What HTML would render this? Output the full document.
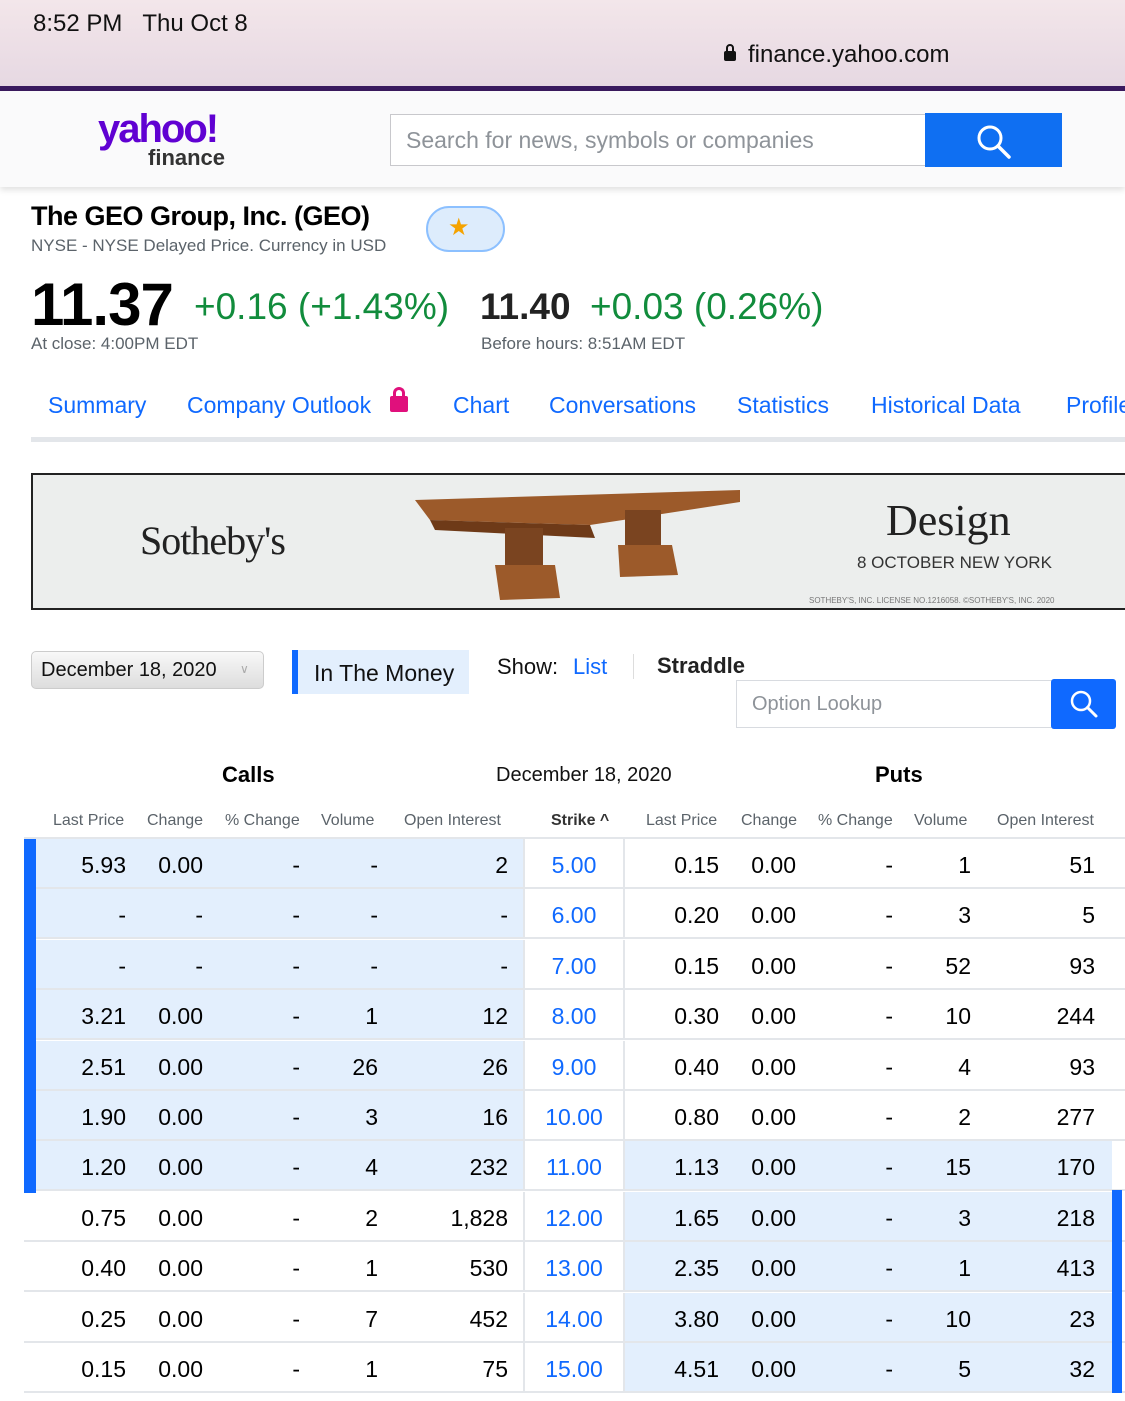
<!DOCTYPE html>
<html><head><meta charset="utf-8"><style>
*{margin:0;padding:0;box-sizing:border-box}
body{width:1125px;height:1401px;overflow:hidden;background:#fff;font-family:"Liberation Sans",sans-serif;position:relative;color:#000}
.a{position:absolute;white-space:nowrap}
.nav{color:#0f69ff;font-size:23px;top:392px}
.row{position:absolute;left:24px;width:1101px;height:50px;border-bottom:2px solid #e3e6ea}
.c{position:absolute;font-size:23px;top:13px;text-align:right;color:#000}
.hd{font-size:16px;color:#5b636a;top:812px}
</style></head><body>
<div class="a" style="left:0;top:0;width:1125px;height:87px;background:linear-gradient(#f3e6ea,#e6d8e2)"></div>
<div class="a" style="left:33px;top:10px;font-size:24px;color:#111">8:52 PM&nbsp;&nbsp;&nbsp;Thu Oct 8</div>
<div class="a" style="left:724px;top:51px;width:12px;height:10px;background:#111;border-radius:2px"></div>
<div class="a" style="left:726px;top:44px;width:8px;height:10px;border:2px solid #111;border-radius:4px 4px 0 0"></div>
<div class="a" style="left:748px;top:41px;font-size:24px;color:#111">finance.yahoo.com</div>
<div class="a" style="left:0;top:86px;width:1125px;height:5px;background:#3a1a5e"></div>
<div class="a" style="left:0;top:91px;width:1125px;height:96px;background:#fafafb;box-shadow:0 3px 6px rgba(0,0,0,.12)"></div>
<div class="a" style="left:98px;top:107px;font-size:40px;font-weight:bold;color:#6001d2;letter-spacing:-2px">yahoo!</div>
<div class="a" style="left:148px;top:145px;font-size:22px;font-weight:bold;color:#333">finance</div>
<div class="a" style="left:390px;top:114px;width:536px;height:52px;border:1px solid #c8c8cc;background:#fff"></div>
<div class="a" style="left:406px;top:127px;font-size:23px;color:#8e9399">Search for news, symbols or companies</div>
<div class="a" style="left:925px;top:113px;width:137px;height:54px;background:#0f6ff2"></div>
<svg class="a" style="left:975px;top:123px" width="38" height="38" viewBox="0 0 38 38"><circle cx="15" cy="15" r="11" fill="none" stroke="#fff" stroke-width="3"/><line x1="23" y1="23" x2="34" y2="34" stroke="#fff" stroke-width="3.5" stroke-linecap="round"/></svg>
<div class="a" style="left:31px;top:201px;font-size:27px;font-weight:bold;letter-spacing:-0.5px">The GEO Group, Inc. (GEO)</div>
<div class="a" style="left:31px;top:236px;font-size:17px;color:#5b636a">NYSE - NYSE Delayed Price. Currency in USD</div>
<div class="a" style="left:426px;top:206px;width:79px;height:46px;border:2px solid #8cc0ff;border-radius:23px;background:#ddecfc"></div>
<div class="a" style="left:448px;top:213px;font-size:24px;color:#f5a300">★</div>
<div class="a" style="left:31px;top:270px;font-size:60px;font-weight:bold;letter-spacing:-1px">11.37</div>
<div class="a" style="left:194px;top:286px;font-size:37px;color:#118c3c">+0.16 (+1.43%)</div>
<div class="a" style="left:480px;top:286px;font-size:37px;font-weight:bold;color:#222">11.40</div>
<div class="a" style="left:590px;top:286px;font-size:37px;color:#118c3c">+0.03 (0.26%)</div>
<div class="a" style="left:31px;top:334px;font-size:17px;color:#5b636a">At close: 4:00PM EDT</div>
<div class="a" style="left:481px;top:334px;font-size:17px;color:#5b636a">Before hours: 8:51AM EDT</div>
<div class="a nav" style="left:48px">Summary</div>
<div class="a nav" style="left:187px">Company Outlook</div>
<div class="a" style="left:390px;top:396px;width:18px;height:16px;background:#e0107c;border-radius:2px"></div>
<div class="a" style="left:393px;top:387px;width:12px;height:12px;border:3px solid #e0107c;border-radius:6px 6px 0 0;border-bottom:none"></div>
<div class="a nav" style="left:453px">Chart</div>
<div class="a nav" style="left:549px">Conversations</div>
<div class="a nav" style="left:737px">Statistics</div>
<div class="a nav" style="left:871px">Historical Data</div>
<div class="a nav" style="left:1066px">Profile</div>
<div class="a" style="left:31px;top:437px;width:1094px;height:5px;background:#e3e6ea"></div>
<div class="a" style="left:31px;top:473px;width:1094px;height:137px;border:2px solid #222;border-right:none;background:#eceeed"></div>
<div class="a" style="left:140px;top:517px;font-size:40px;font-family:'Liberation Serif',serif;color:#222;letter-spacing:-1px">Sotheby's</div>
<svg class="a" style="left:410px;top:480px" width="340" height="125" viewBox="0 0 340 125"><polygon points="5,20 330,10 330,22 180,45 20,40" fill="#9c5a2a"/><polygon points="20,40 180,45 185,58 25,50" fill="#6e3a18"/><rect x="95" y="48" width="38" height="40" fill="#7a4420"/><polygon points="85,85 145,85 150,118 90,120" fill="#9c5a2a"/><rect x="215" y="30" width="36" height="38" fill="#7a4420"/><polygon points="208,65 262,65 268,95 210,97" fill="#9c5a2a"/></svg>
<div class="a" style="left:886px;top:495px;font-size:44px;font-family:'Liberation Serif',serif;color:#222">Design</div>
<div class="a" style="left:857px;top:553px;font-size:17px;color:#333">8 OCTOBER NEW YORK</div>
<div class="a" style="left:809px;top:596px;font-size:8px;color:#777">SOTHEBY'S, INC. LICENSE NO.1216058. ©SOTHEBY'S, INC. 2020</div>
<div class="a" style="left:31px;top:651px;width:233px;height:38px;border:1px solid #ccc;border-radius:5px;background:linear-gradient(#f8f8f8,#ddd)"></div>
<div class="a" style="left:41px;top:659px;font-size:20px;color:#111">December 18, 2020</div>
<div class="a" style="left:240px;top:662px;font-size:12px;color:#aaa">∨</div>
<div class="a" style="left:292px;top:650px;width:177px;height:44px;background:#e3effd;border-left:6px solid #0f69ff"></div>
<div class="a" style="left:314px;top:660px;font-size:23px;color:#111">In The Money</div>
<div class="a" style="left:497px;top:654px;font-size:22px;color:#111">Show:</div>
<div class="a" style="left:573px;top:654px;font-size:22px;color:#0f69ff">List</div>
<div class="a" style="left:633px;top:654px;width:1px;height:25px;background:#ddd"></div>
<div class="a" style="left:657px;top:653px;font-size:22px;font-weight:bold;color:#222">Straddle</div>
<div class="a" style="left:736px;top:680px;width:318px;height:48px;border:1px solid #d8dbe0;background:#fff"></div>
<div class="a" style="left:752px;top:693px;font-size:20px;color:#8e9399">Option Lookup</div>
<div class="a" style="left:1051px;top:679px;width:65px;height:50px;background:#0f69ff;border-radius:3px"></div>
<svg class="a" style="left:1068px;top:688px" width="32" height="32" viewBox="0 0 32 32"><circle cx="13" cy="13" r="9" fill="none" stroke="#fff" stroke-width="2.5"/><line x1="19.5" y1="19.5" x2="28" y2="28" stroke="#fff" stroke-width="3" stroke-linecap="round"/></svg>
<div class="a" style="left:222px;top:762px;font-size:22px;font-weight:bold">Calls</div>
<div class="a" style="left:496px;top:764px;font-size:20px;color:#111">December 18, 2020</div>
<div class="a" style="left:875px;top:762px;font-size:22px;font-weight:bold">Puts</div>
<div class="a hd" style="left:53px">Last Price</div>
<div class="a hd" style="left:147px">Change</div>
<div class="a hd" style="left:225px">% Change</div>
<div class="a hd" style="left:321px">Volume</div>
<div class="a hd" style="left:404px">Open Interest</div>
<div class="a hd" style="left:551px;font-weight:bold;color:#333">Strike ^</div>
<div class="a hd" style="left:646px">Last Price</div>
<div class="a hd" style="left:741px">Change</div>
<div class="a hd" style="left:818px">% Change</div>
<div class="a hd" style="left:914px">Volume</div>
<div class="a hd" style="left:997px">Open Interest</div>
<div class="a" style="left:24px;top:837px;width:1101px;height:2px;background:#e3e6ea"></div>
<div id="t"></div>
<script>
var d=[["5.93","0.00","-","-","2","5.00","0.15","0.00","-","1","51"],
["-","-","-","-","-","6.00","0.20","0.00","-","3","5"],
["-","-","-","-","-","7.00","0.15","0.00","-","52","93"],
["3.21","0.00","-","1","12","8.00","0.30","0.00","-","10","244"],
["2.51","0.00","-","26","26","9.00","0.40","0.00","-","4","93"],
["1.90","0.00","-","3","16","10.00","0.80","0.00","-","2","277"],
["1.20","0.00","-","4","232","11.00","1.13","0.00","-","15","170"],
["0.75","0.00","-","2","1,828","12.00","1.65","0.00","-","3","218"],
["0.40","0.00","-","1","530","13.00","2.35","0.00","-","1","413"],
["0.25","0.00","-","7","452","14.00","3.80","0.00","-","10","23"],
["0.15","0.00","-","1","75","15.00","4.51","0.00","-","5","32"]];
var R=[126,203,300,378,508,0,719,796,893,971,1095];
var h="";
d.forEach(function(r,i){
 var top=839+i*50.4;
 h+='<div class="row" style="top:'+top+'px">';
 if(i<=6){h+='<div class="a" style="left:0;top:0;width:500px;height:48px;background:#e3effd"></div><div class="a" style="left:0;top:0;width:12px;height:52px;background:#0f69ff"></div>';}
 if(i>=6){h+='<div class="a" style="left:600px;top:0;width:488px;height:48px;background:#e3effd"></div>';}
 if(i>=7){h+='<div class="a" style="left:1088px;top:-2px;width:10px;height:52px;background:#0f69ff"></div>';}
 h+='<div class="a" style="left:499px;top:0;width:2px;height:48px;background:#e3e6ea"></div><div class="a" style="left:599px;top:0;width:2px;height:48px;background:#e3e6ea"></div>';
 r.forEach(function(v,j){
  if(j==5){h+='<div class="c" style="left:500px;width:100px;text-align:center;color:#0f69ff">'+v+'</div>';}
  else{h+='<div class="c" style="right:'+(1101-(R[j]-24))+'px">'+v+'</div>';}
 });
 h+='</div>';
});
document.getElementById("t").innerHTML=h;
</script>
</body></html>
